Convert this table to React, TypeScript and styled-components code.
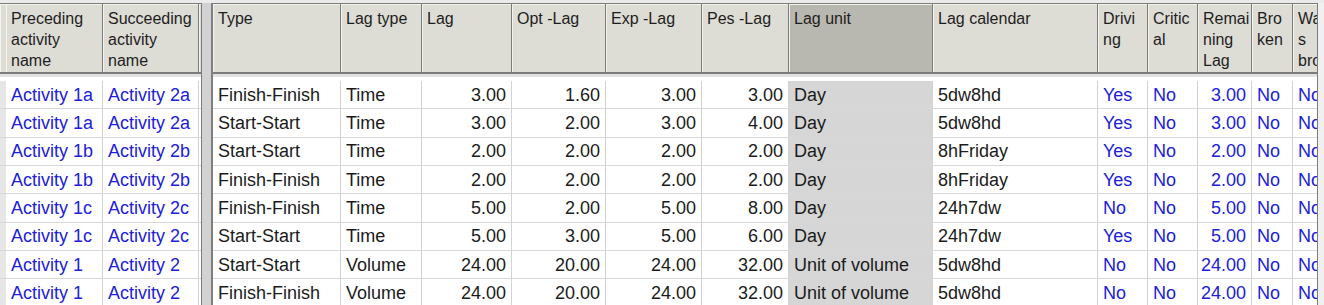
import React from "react";
import styled, { createGlobalStyle } from "styled-components";

const Global = createGlobalStyle`
  html, body { margin: 0; padding: 0; background: #ebebeb; }
  body { font-family: "Liberation Sans", Arial, sans-serif; }
`;

type Align = "left" | "right";
type Tone = "black" | "blue";

interface Col {
  label: string[];
  w: number;
  align?: Align;
  tone?: Tone;
  shade?: boolean;
}

const leftCols: Col[] = [
  { label: [""], w: 6, tone: "blue" },
  { label: ["Preceding", "activity", "name"], w: 97, tone: "blue" },
  { label: ["Succeeding", "activity", "name"], w: 96, tone: "blue" },
  { label: [""], w: 2 },
];

const rightCols: Col[] = [
  { label: ["Type"], w: 128 },
  { label: ["Lag type"], w: 81 },
  { label: ["Lag"], w: 90, align: "right" },
  { label: ["Opt -Lag"], w: 94, align: "right" },
  { label: ["Exp -Lag"], w: 96, align: "right" },
  { label: ["Pes -Lag"], w: 87, align: "right" },
  { label: ["Lag unit"], w: 144, shade: true },
  { label: ["Lag calendar"], w: 165 },
  { label: ["Drivi", "ng"], w: 50, tone: "blue" },
  { label: ["Critic", "al"], w: 50, tone: "blue" },
  { label: ["Remai", "ning", "Lag"], w: 54, align: "right", tone: "blue" },
  { label: ["Bro", "ken"], w: 41, tone: "blue" },
  { label: ["Wa", "s", "broken"], w: 40, tone: "blue" },
];

const rows: string[][] = [
  ["Activity 1a", "Activity 2a", "Finish-Finish", "Time", "3.00", "1.60", "3.00", "3.00", "Day", "5dw8hd", "Yes", "No", "3.00", "No", "No"],
  ["Activity 1a", "Activity 2a", "Start-Start", "Time", "3.00", "2.00", "3.00", "4.00", "Day", "5dw8hd", "Yes", "No", "3.00", "No", "No"],
  ["Activity 1b", "Activity 2b", "Start-Start", "Time", "2.00", "2.00", "2.00", "2.00", "Day", "8hFriday", "Yes", "No", "2.00", "No", "No"],
  ["Activity 1b", "Activity 2b", "Finish-Finish", "Time", "2.00", "2.00", "2.00", "2.00", "Day", "8hFriday", "Yes", "No", "2.00", "No", "No"],
  ["Activity 1c", "Activity 2c", "Finish-Finish", "Time", "5.00", "2.00", "5.00", "8.00", "Day", "24h7dw", "No", "No", "5.00", "No", "No"],
  ["Activity 1c", "Activity 2c", "Start-Start", "Time", "5.00", "3.00", "5.00", "6.00", "Day", "24h7dw", "Yes", "No", "5.00", "No", "No"],
  ["Activity 1", "Activity 2", "Start-Start", "Volume", "24.00", "20.00", "24.00", "32.00", "Unit of volume", "5dw8hd", "No", "No", "24.00", "No", "No"],
  ["Activity 1", "Activity 2", "Finish-Finish", "Volume", "24.00", "20.00", "24.00", "32.00", "Unit of volume", "5dw8hd", "No", "No", "24.00", "No", "No"],
];

const Page = styled.div`
  display: flex;
  width: 1324px;
  height: 305px;
  overflow: hidden;
  padding-top: 3px;
  box-sizing: border-box;
  background: #ebebeb;
`;

const Pane = styled.div<{ $w: number }>`
  width: ${(p) => p.$w}px;
  flex: none;
  overflow: hidden;
  border-right: 1px solid #7c7c7c;
  box-sizing: border-box;
  display: flex;
  flex-direction: column;
`;

const Splitter = styled.div`
  width: 11px;
  flex: none;
  background: #d2d2d2;
  border-right: 2px solid #7f7f7f;
  box-sizing: border-box;
`;

const EdgeStrip = styled.div`
  flex: 1;
  background: #f0f0f0;
`;

const HeaderRow = styled.div<{ $cols: string }>`
  display: grid;
  grid-template-columns: ${(p) => p.$cols};
  height: 71px;
  flex: none;
  border-top: 1px solid #7c7c7c;
  border-bottom: 2px solid #7c7c7c;
  box-sizing: border-box;
  background: #dddcd5;
`;

const HeaderCell = styled.div<{ $shade?: boolean }>`
  background: ${(p) => (p.$shade ? "#b9b8b0" : "#dddcd5")};
  border-right: 1px solid #7c7c7c;
  box-shadow: inset 1px 1px 0 #f3f3ef;
  padding: 4px 4px 0 5px;
  font-size: 16px;
  line-height: 21px;
  color: #1e1e1e;
  white-space: nowrap;
  overflow: hidden;
`;

const Body = styled.div`
  border-top: 3px solid #e2e2e2;
  padding-top: 4px;
  background: #ffffff;
  flex: 1;
`;

const Row = styled.div<{ $cols: string }>`
  display: grid;
  grid-template-columns: ${(p) => p.$cols};
  height: calc(85px / 3);
`;

const Cell = styled.div<{ $align?: Align; $tone?: Tone; $shade?: boolean; $stub?: boolean }>`
  display: flex;
  align-items: center;
  justify-content: ${(p) => (p.$align === "right" ? "flex-end" : "flex-start")};
  padding: 1px 5px 0 5px;
  box-sizing: border-box;
  border-right: 1px solid #d3d3d3;
  border-bottom: 1px solid #d8d8d8;
  background: ${(p) => (p.$stub ? "#e6e6e6" : p.$shade ? "#d6d6d6" : "#ffffff")};
  font-size: 18px;
  color: ${(p) => (p.$tone === "blue" ? "#2020dc" : "#1b1b1b")};
  white-space: nowrap;
  overflow: hidden;
`;

const colTemplate = (cols: Col[]) => cols.map((c) => `${c.w}px`).join(" ");

const Grid: React.FC<{ cols: Col[]; data: string[][]; width: number; stub?: boolean }> = ({
  cols,
  data,
  width,
  stub,
}) => {
  const tpl = colTemplate(cols);
  return (
    <Pane $w={width}>
      <HeaderRow $cols={tpl}>
        {cols.map((c, i) => (
          <HeaderCell key={i} $shade={c.shade}>
            {c.label.map((l, j) => (
              <React.Fragment key={j}>
                {j > 0 && <br />}
                {l}
              </React.Fragment>
            ))}
          </HeaderCell>
        ))}
      </HeaderRow>
      <Body>
        {data.map((r, ri) => (
          <Row key={ri} $cols={tpl}>
            {cols.map((c, ci) => (
              <Cell
                key={ci}
                $align={c.align}
                $tone={c.tone}
                $shade={c.shade}
                $stub={stub && ci === 0}
              >
                {r[ci] ?? ""}
              </Cell>
            ))}
          </Row>
        ))}
      </Body>
    </Pane>
  );
};

export default function App() {
  const leftData = rows.map((r) => ["", r[0], r[1], ""]);
  const rightData = rows.map((r) => r.slice(2));
  return (
    <>
      <Global />
      <Page>
        <Grid cols={leftCols} data={leftData} width={202} stub />
        <Splitter />
        <Grid cols={rightCols} data={rightData} width={1105} />
        <EdgeStrip />
      </Page>
    </>
  );
}
